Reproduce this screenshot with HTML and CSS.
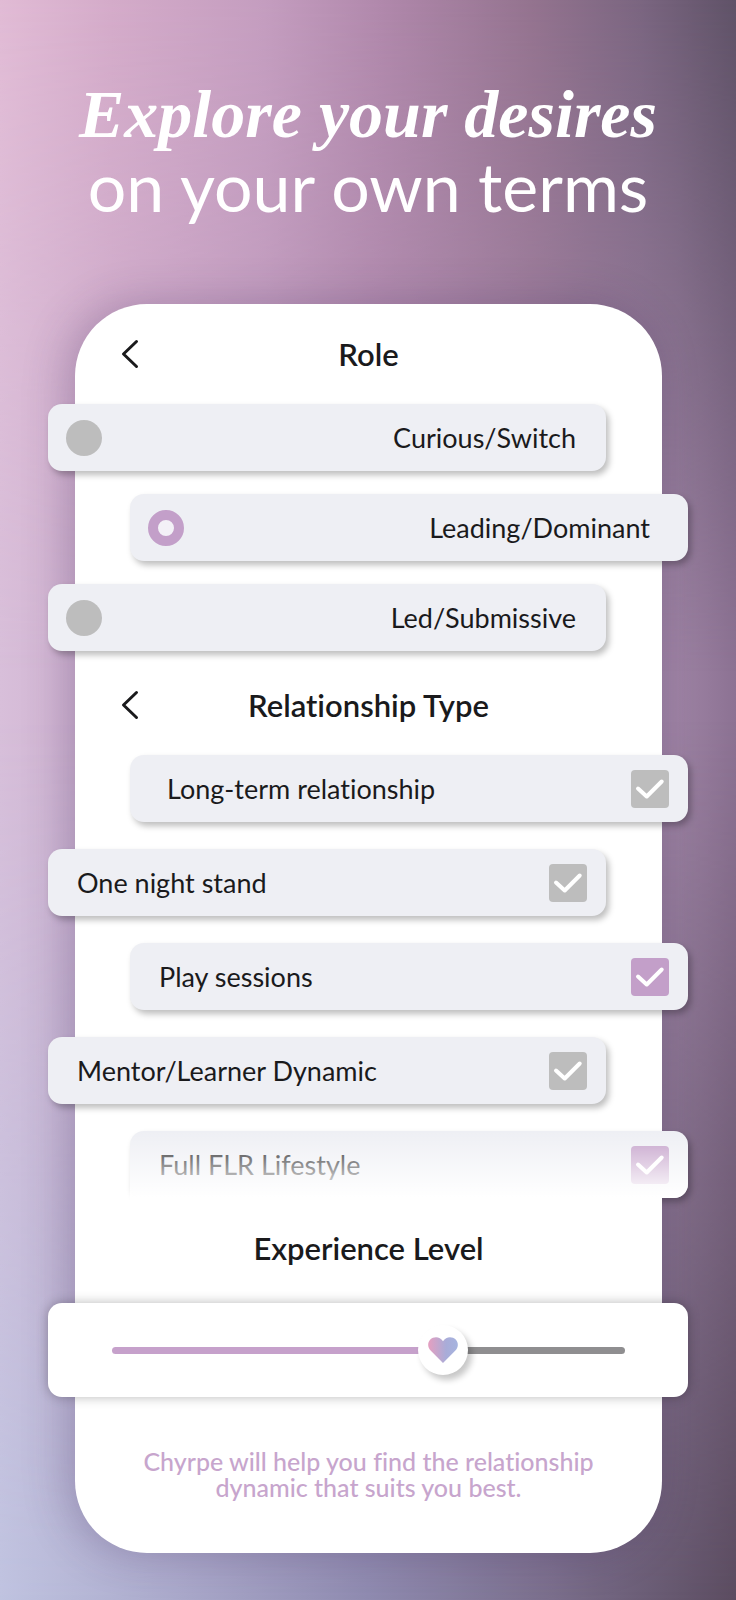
FILE: index.html
```html
<!DOCTYPE html>
<html lang="en">

<head>
  <meta charset="UTF-8">
  <meta name="viewport" content="width=device-width, initial-scale=1.0">
  <title>Chyrpe</title>
  <link rel="stylesheet" href="styles.css">
</head>

<body>
  <h1 class="headline">
    <em class="headline-accent">Explore your desires</em>
    <span class="headline-plain">on your own terms</span>
  </h1>

  <main class="card">
    <section class="section">
      <div class="section-header">
        <button class="back-btn" type="button" aria-label="Back">
          <svg width="18" height="30" viewBox="0 0 18 30"><path d="M15.5 2.5 2.5 15l13 12.5"/></svg>
        </button>
        <h2 class="section-title">Role</h2>
      </div>
      <div class="options options-role">
        <label class="option option-left">
          <input class="radio" type="radio" name="role">
          <span>Curious/Switch</span>
        </label>
        <label class="option option-right option-inset">
          <input class="radio" type="radio" name="role" checked>
          <span>Leading/Dominant</span>
        </label>
        <label class="option option-left">
          <input class="radio" type="radio" name="role">
          <span>Led/Submissive</span>
        </label>
      </div>
    </section>

    <section class="section section-type">
      <div class="section-header">
        <button class="back-btn" type="button" aria-label="Back">
          <svg width="18" height="30" viewBox="0 0 18 30"><path d="M15.5 2.5 2.5 15l13 12.5"/></svg>
        </button>
        <h2 class="section-title">Relationship Type</h2>
      </div>
      <div class="options options-type">
        <label class="option option-right option-inset">
          <span>Long-term relationship</span>
          <span class="tick">
            <input class="checkbox" type="checkbox">
            <svg width="38" height="38" viewBox="0 0 38 38"><path d="M7 18.5 15.7 26.5 30.7 11.5"/></svg>
          </span>
        </label>
        <label class="option option-left">
          <span>One night stand</span>
          <span class="tick">
            <input class="checkbox" type="checkbox">
            <svg width="38" height="38" viewBox="0 0 38 38"><path d="M7 18.5 15.7 26.5 30.7 11.5"/></svg>
          </span>
        </label>
        <label class="option option-right">
          <span>Play sessions</span>
          <span class="tick">
            <input class="checkbox" type="checkbox" checked>
            <svg width="38" height="38" viewBox="0 0 38 38"><path d="M7 18.5 15.7 26.5 30.7 11.5"/></svg>
          </span>
        </label>
        <label class="option option-left">
          <span>Mentor/Learner Dynamic</span>
          <span class="tick">
            <input class="checkbox" type="checkbox">
            <svg width="38" height="38" viewBox="0 0 38 38"><path d="M7 18.5 15.7 26.5 30.7 11.5"/></svg>
          </span>
        </label>
        <label class="option option-right option-faded">
          <span>Full FLR Lifestyle</span>
          <span class="tick">
            <input class="checkbox" type="checkbox" checked>
            <svg width="38" height="38" viewBox="0 0 38 38"><path d="M7 18.5 15.7 26.5 30.7 11.5"/></svg>
          </span>
        </label>
      </div>
    </section>

    <section class="section section-level">
      <div class="section-header">
        <h2 class="section-title"><label for="level">Experience Level</label></h2>
      </div>
      <div class="level">
        <div class="slider" id="slider" style="--level: 66">
          <input class="range" type="range" id="level" min="0" max="100" value="66" oninput="moveHeart()">
          <svg class="heart" width="30" height="26" viewBox="0 0 30 26">
            <defs>
              <linearGradient id="heartFill" x1="0" y1="0" x2="1" y2="0">
                <stop offset="0" stop-color="#e59fc0"/>
                <stop offset="0.6" stop-color="#a9acd8"/>
                <stop offset="1" stop-color="#a6b4df"/>
              </linearGradient>
            </defs>
            <path fill="url(#heartFill)" d="M15 26 2.6 13.6C-.6 10.400-.6 5.500 2.300 2.600 5.700-.8 11.800-.8 15 4.200 18.200-.8 24.300-.8 27.700 2.600c2.900 2.900 2.900 7.800-.3 11z"/>
          </svg>
        </div>
      </div>
    </section>

    <p class="note">Chyrpe will help you find the relationship dynamic that suits you best.</p>
  </main>

  <script>
    function moveHeart() {
      var level = document.getElementById("level").value;
      document.getElementById("slider").style.setProperty("--level", level);
    }
  </script>
</body>

</html>
```
FILE: styles.css
```css
* {
  box-sizing: border-box;
}

body {
  position: relative;
  isolation: isolate;
  margin: 0;
  min-height: 100vh;
  padding-bottom: 47px;
  font-family: Lato, "Open Sans", sans-serif;
  font-variant-ligatures: none;
  color: #1a1a1c;
  background: linear-gradient(to right, #d8bfda 0%, #c8a6c8 25%, #b490b3 50%, #a184a5 80%, #9e83a4 92%, #8c7293 100%);
}

/* top and bottom colours, each fading towards the middle */
body::before,
body::after {
  content: "";
  position: absolute;
  inset: 0;
  z-index: -1;
}

body::before {
  background: linear-gradient(to right, #e1bbd5 0%, #d4abc9 15%, #c49dbf 36%, #b088ab 52%, #94738f 72%, #7a6580 87%, #5f5267 100%);
  mask-image: linear-gradient(to bottom, #000 0%, transparent 42%);
}

body::after {
  background: linear-gradient(to right, #bfc3e0 0%, #a9a8ca 25%, #8f8bb0 50%, #7a6e8c 75%, #5b4c60 100%);
  mask-image: linear-gradient(to top, #000 0%, rgba(0, 0, 0, 0.6) 20%, transparent 55%);
}

.headline {
  margin: 0;
  padding: 78px 20px 82px;
  font-size: 68px;
  line-height: 72px;
  text-align: center;
  color: #fff;
}

.headline-accent,
.headline-plain {
  display: block;
}

.headline-accent {
  font-family: "Liberation Serif", serif;
  font-weight: bold;
  font-style: italic;
}

.headline-plain {
  font-weight: 400;
}

.card {
  margin: 0 74px 0 75px;
  background-color: #fff;
  border-radius: 72px;
  box-shadow: -8px 0 44px rgba(60, 40, 90, 0.28);
}

.section-type {
  padding-top: 4px;
}

.section-header {
  display: grid;
  grid-template-columns: 64px 1fr 64px;
  align-items: center;
  height: 100px;
  padding: 0 36px;
}

.section-title {
  grid-column: 2;
  margin: 0;
  font-size: 31px;
  font-weight: 600;
  text-align: center;
}

.back-btn {
  display: flex;
  justify-content: center;
  width: 38px;
  padding: 6px 0;
  border: none;
  background: none;
  cursor: pointer;
}

.back-btn svg {
  fill: none;
  stroke: #1a1a1c;
  stroke-width: 3;
  stroke-linecap: round;
  stroke-linejoin: round;
}

.options {
  display: flex;
  flex-direction: column;
}

.options-role {
  gap: 23px;
}

.options-type {
  gap: 27px;
}

.option {
  display: flex;
  align-items: center;
  justify-content: space-between;
  height: 67px;
  font-size: 27px;
  background-color: #eeeff4;
  border-radius: 14px;
  box-shadow: 3px 4px 6px rgba(0, 0, 0, 0.26);
  cursor: pointer;
}

.option-left {
  margin: 0 56px 0 -27px;
}

.option-right {
  margin: 0 -26px 0 55px;
}

.options-role .option {
  padding: 0 30px 0 18px;
}

.options-role .option-inset {
  padding-right: 38px;
}

.options-type .option {
  padding: 0 19px 0 29px;
}

.options-type .option-inset {
  padding-left: 37px;
}

.radio {
  appearance: none;
  width: 36px;
  height: 36px;
  margin: 0;
  border-radius: 50%;
  background-color: #bdbdbd;
}

.radio:checked {
  border: 10px solid #c39fc9;
  background-color: #f3f1f7;
}

.tick {
  display: grid;
}

.tick > * {
  grid-area: 1 / 1;
}

.tick svg {
  fill: none;
  stroke: #fff;
  stroke-width: 4;
  stroke-linecap: round;
  stroke-linejoin: round;
  pointer-events: none;
}

.checkbox {
  appearance: none;
  width: 38px;
  height: 38px;
  margin: 0;
  border-radius: 4px;
  background-color: #bdbdbd;
}

.checkbox:checked {
  background-color: #c39fc9;
}

/* last row fades out into the card */
.option-faded {
  position: relative;
}

.option-faded::before {
  content: "";
  position: absolute;
  top: 0;
  left: 0;
  right: 26px;
  bottom: -14px;
  background: linear-gradient(to bottom, rgba(255, 255, 255, 0) 0, #fff 66px);
}

.option-faded::after {
  content: "";
  position: absolute;
  top: 0;
  left: calc(100% - 26px);
  right: 0;
  bottom: 0;
  border-radius: 0 14px 14px 0;
  background: linear-gradient(to bottom, rgba(255, 255, 255, 0) 0, #fff 66px);
}

.section-level .section-header {
  margin-bottom: 5px;
}

.level {
  margin: 0 -26px 0 -27px;
  padding: 22px 63px 22px 64px;
  background-color: #fff;
  border-radius: 14px;
  box-shadow: 0 0 12px rgba(0, 0, 0, 0.28);
}

.slider {
  --position: calc(25px + (100% - 50px) * var(--level) / 100);
  position: relative;
}

.range {
  appearance: none;
  display: block;
  width: 100%;
  height: 50px;
  margin: 0;
  background: none;
  cursor: pointer;
}

.range::-webkit-slider-runnable-track {
  height: 7px;
  border-radius: 4px;
  background: linear-gradient(to right, #c6a1cb var(--position), #8f8e90 var(--position));
}

.range::-webkit-slider-thumb {
  appearance: none;
  width: 50px;
  height: 50px;
  margin-top: -22px;
  border-radius: 50%;
  background-color: #fff;
  box-shadow: 4px 5px 6px rgba(0, 0, 0, 0.22);
}

.heart {
  position: absolute;
  top: 50%;
  left: var(--position);
  transform: translate(-50%, -50%);
  pointer-events: none;
}

.note {
  margin: 0;
  padding: 51px 60px 53px;
  font-size: 25px;
  font-weight: 500;
  line-height: 26px;
  text-align: center;
  color: #c7a5cd;
}
```
